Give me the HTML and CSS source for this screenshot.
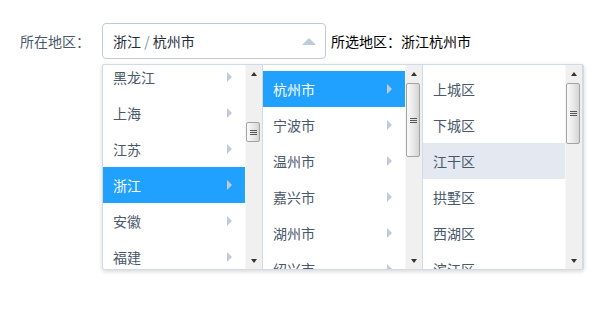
FILE: index.html
```html
<!DOCTYPE html>
<html lang="zh-CN">
<head>
<meta charset="utf-8">
<title>级联选择</title>
<link rel="stylesheet" href="styles.css">
</head>
<body>
<div class="row">
  <label class="label">所在地区：</label>
  <div class="cascader">
    <div class="input">
      <span class="value">浙江<span class="sep"> / </span>杭州市</span>
      <svg class="caret" width="14" height="7" viewBox="0 0 14 7"><path d="M0 7 L7 0 L14 7 Z" fill="#bfcbd9"/></svg>
    </div>
    <div class="menus">
      <div class="menu">
        <div class="viewport">
          <ul class="list scrolled">
            <li class="item ext">黑龙江</li>
            <li class="item ext">上海</li>
            <li class="item ext">江苏</li>
            <li class="item ext active">浙江</li>
            <li class="item ext">安徽</li>
            <li class="item ext">福建</li>
          </ul>
        </div>
        <div class="sbar">
          <div class="sbtn"><span class="tri up"></span></div>
          <div class="track"><div class="thumb t1"><svg width="7" height="7" viewBox="0 0 7 7"><path d="M0 1.5H7M0 3.5H7M0 5.5H7" stroke="#555" stroke-width="1"/></svg></div></div>
          <div class="sbtn"><span class="tri down"></span></div>
        </div>
      </div>
      <div class="menu">
        <div class="viewport">
          <ul class="list">
            <li class="item ext active">杭州市</li>
            <li class="item ext">宁波市</li>
            <li class="item ext">温州市</li>
            <li class="item ext">嘉兴市</li>
            <li class="item ext">湖州市</li>
            <li class="item ext">绍兴市</li>
          </ul>
        </div>
        <div class="sbar">
          <div class="sbtn"><span class="tri up"></span></div>
          <div class="track"><div class="thumb t2"><svg width="7" height="7" viewBox="0 0 7 7"><path d="M0 1.5H7M0 3.5H7M0 5.5H7" stroke="#555" stroke-width="1"/></svg></div></div>
          <div class="sbtn"><span class="tri down"></span></div>
        </div>
      </div>
      <div class="menu">
        <div class="viewport">
          <ul class="list">
            <li class="item">上城区</li>
            <li class="item">下城区</li>
            <li class="item hover">江干区</li>
            <li class="item">拱墅区</li>
            <li class="item">西湖区</li>
            <li class="item">滨江区</li>
          </ul>
        </div>
        <div class="sbar">
          <div class="sbtn"><span class="tri up"></span></div>
          <div class="track"><div class="thumb t3"><svg width="7" height="7" viewBox="0 0 7 7"><path d="M0 1.5H7M0 3.5H7M0 5.5H7" stroke="#555" stroke-width="1"/></svg></div></div>
          <div class="sbtn"><span class="tri down"></span></div>
        </div>
      </div>
    </div>
  </div>
  <span class="result">所选地区：浙江杭州市</span>
</div>
</body>
</html>
```

FILE: styles.css
```css
* { box-sizing: border-box; }
html, body { margin: 0; padding: 0; background: #fff; }
body {
  font-family: "Noto Sans CJK SC", "Liberation Sans", sans-serif;
  font-size: 14px;
  color: #1f2d3d;
  min-height: 311px;
}
.row {
  display: flex;
  align-items: center;
  padding: 23px 0 0 20px;
}
.label {
  width: 82px;
  color: #48576a;
  line-height: 20px;
}
.cascader {
  position: relative;
  width: 224px;
  height: 36px;
}
.input {
  height: 36px;
  border: 1px solid #bfcbd9;
  border-radius: 4px;
  padding: 0 9px 0 10px;
  display: flex;
  align-items: center;
  justify-content: space-between;
  background: #fff;
}
.value { line-height: 20px; color: #1f2d3d; }
.sep { color: #8391a5; }
.caret { margin-top: 1px; }
.result {
  margin-left: 5px;
  color: #000;
  line-height: 20px;
}
.menus {
  position: absolute;
  top: 100%;
  left: 0;
  margin-top: 5px;
  width: 482px;
  height: 206px;
  display: flex;
  background: #fff;
  border: 1px solid #d1dbe5;
  border-radius: 2px;
  box-shadow: 0 2px 4px rgba(0,0,0,.12), 0 0 6px rgba(0,0,0,.04);
  z-index: 10;
}
.menu {
  width: 160px;
  height: 204px;
  flex: none;
  border-right: 1px solid #d1dbe5;
  display: flex;
}
.viewport {
  width: 142px;
  height: 204px;
  overflow: hidden;
}
.list {
  list-style: none;
  margin: 0;
  padding: 6px 0;
}
.list.scrolled { margin-top: -12px; }
.item {
  position: relative;
  height: 36px;
  padding: 8px 10px;
  line-height: 20px;
  color: #48576a;
  white-space: nowrap;
}
.item.ext::after {
  content: "";
  position: absolute;
  right: 13px;
  top: 13px;
  border-left: 5px solid #bfcbd9;
  border-top: 5px solid transparent;
  border-bottom: 5px solid transparent;
}
.item.active { background: #20a0ff; color: #fff; }
.item.hover { background: #e4e8f1; }
.sbar {
  width: 17px;
  height: 204px;
  display: flex;
  flex-direction: column;
  background: #f0f0f0;
  border-left: 1px solid #f7f7f7;
}
.sbtn {
  height: 17px;
  flex: none;
  display: flex;
  align-items: center;
  justify-content: center;
}
.tri {
  width: 0;
  height: 0;
  border-left: 3.5px solid transparent;
  border-right: 3.5px solid transparent;
}
.tri.up { border-bottom: 4px solid #333; }
.tri.down { border-top: 4px solid #333; }
.track { flex: 1; }
.thumb {
  width: 14px;
  border: 1px solid #a3a3a3;
  border-radius: 2px;
  background: linear-gradient(to right, #fafafa, #e6e6e6 60%, #d4d4d4);
  display: flex;
  align-items: center;
  justify-content: center;
}
.t1 { margin-top: 40px; height: 20px; }
.t2 { margin-top: 1px; height: 74px; }
.t3 { margin-top: 1px; height: 61px; }
```
